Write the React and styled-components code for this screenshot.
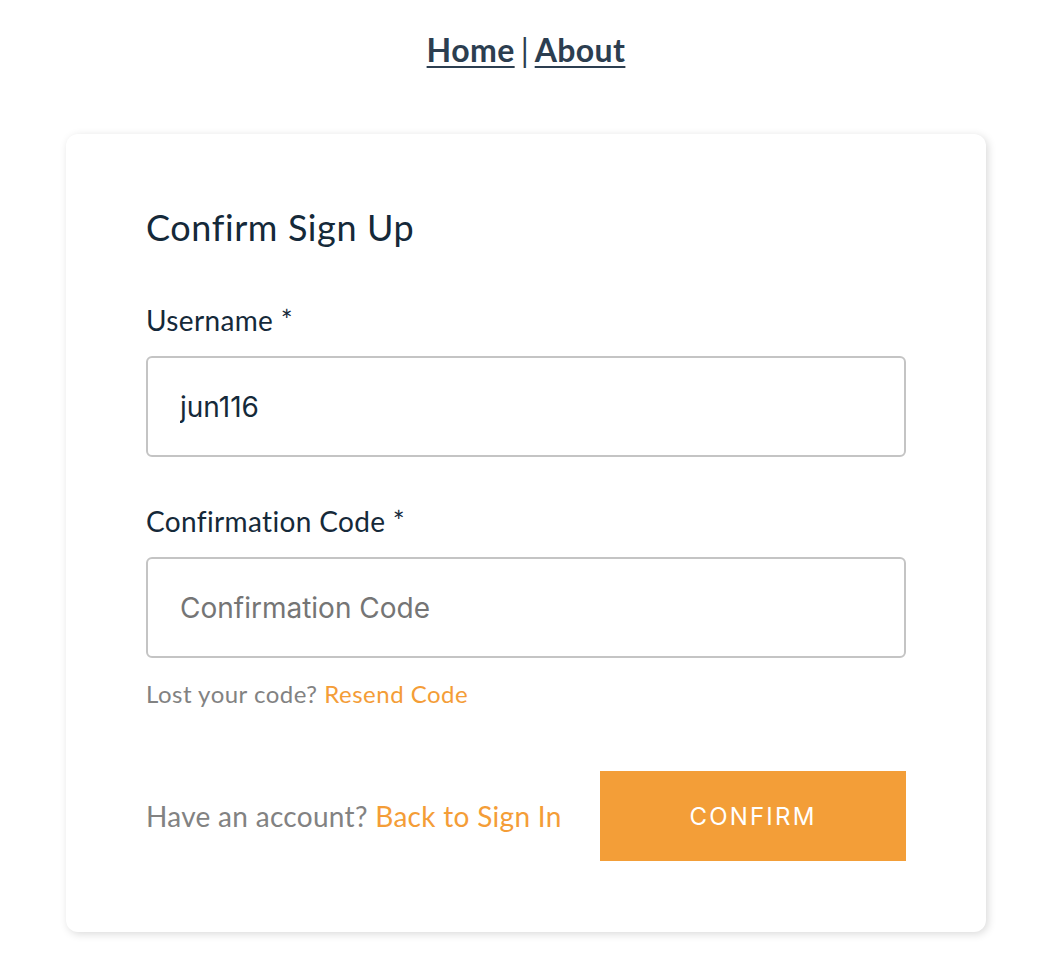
import React from "react";
import styled, { createGlobalStyle } from "styled-components";

const GlobalStyle = createGlobalStyle`
  body {
    margin: 0;
    background: #ffffff;
    font-family: Lato, "Liberation Sans", sans-serif;
  }
`;

const Page = styled.div`
  padding-left: 8px;
  color: #2c3e50;
`;

const Nav = styled.nav`
  padding: 30px 0 64px;
  text-align: center;
  font-size: 32px;
  line-height: 40px;
  font-weight: 700;
  color: #2c3e50;

  a {
    color: #2c3e50;
    text-decoration: underline;
    text-underline-offset: 4px;
    text-decoration-thickness: 2px;
    letter-spacing: 0.4px;
  }

  .sep {
    font-weight: 400;
    margin: 0 6px;
  }
`;

const Card = styled.section`
  width: 920px;
  box-sizing: border-box;
  margin: 0 auto 40px;
  padding: 71px 80px 71px;
  background: #ffffff;
  border-radius: 12px;
  box-shadow: 2px 2px 8px 0 rgba(0, 0, 0, 0.15);
  color: #152939;
`;

const Header = styled.h2`
  margin: 0 0 53px;
  font-size: 36px;
  line-height: 44px;
  font-weight: 400;
  letter-spacing: 0.6px;
  color: #152939;
`;

const Field = styled.div`
  margin-bottom: ${(p) => p.gap || "46px"};
`;

const Label = styled.label`
  display: block;
  margin-bottom: 18px;
  font-size: 28px;
  line-height: 36px;
  letter-spacing: 0.35px;
  color: #152939;
`;

const Input = styled.input`
  display: block;
  width: 100%;
  box-sizing: border-box;
  height: 101px;
  padding: 0 32px;
  border: 2px solid #c4c4c4;
  border-radius: 6px;
  font-family: Inter, "Liberation Sans", sans-serif;
  font-size: 28px;
  color: #152939;
  background: #ffffff;
  outline: none;

  &::placeholder {
    color: #757575;
  }
`;

const Hint = styled.div`
  margin-top: 21px;
  font-size: 24px;
  line-height: 30px;
  letter-spacing: 0.5px;
  color: #828282;
`;

const Link = styled.a`
  color: #f49d37;
  text-decoration: none;
  cursor: pointer;
`;

const Footer = styled.div`
  display: flex;
  align-items: center;
  justify-content: space-between;
  margin-top: 62px;
`;

const FooterText = styled.span`
  font-size: 28px;
  line-height: 36px;
  letter-spacing: 0.3px;
  color: #828282;
`;

const Button = styled.button`
  min-width: 306px;
  height: 90px;
  padding: 0;
  border: none;
  background: #f39e38;
  color: #ffffff;
  font-family: Inter, "Liberation Sans", sans-serif;
  font-size: 24px;
  letter-spacing: 2.2px;
  text-transform: uppercase;
  cursor: pointer;
`;

export default function App() {
  return (
    <Page>
      <GlobalStyle />
      <Nav>
        <a href="#home">Home</a>
        <span className="sep">|</span>
        <a href="#about">About</a>
      </Nav>
      <Card>
        <Header>Confirm Sign Up</Header>
        <Field>
          <Label>Username *</Label>
          <Input defaultValue="jun116" />
        </Field>
        <Field gap="0">
          <Label>Confirmation Code *</Label>
          <Input placeholder="Confirmation Code" />
          <Hint>
            Lost your code? <Link>Resend Code</Link>
          </Hint>
        </Field>
        <Footer>
          <FooterText>
            Have an account? <Link>Back to Sign In</Link>
          </FooterText>
          <Button>Confirm</Button>
        </Footer>
      </Card>
    </Page>
  );
}
